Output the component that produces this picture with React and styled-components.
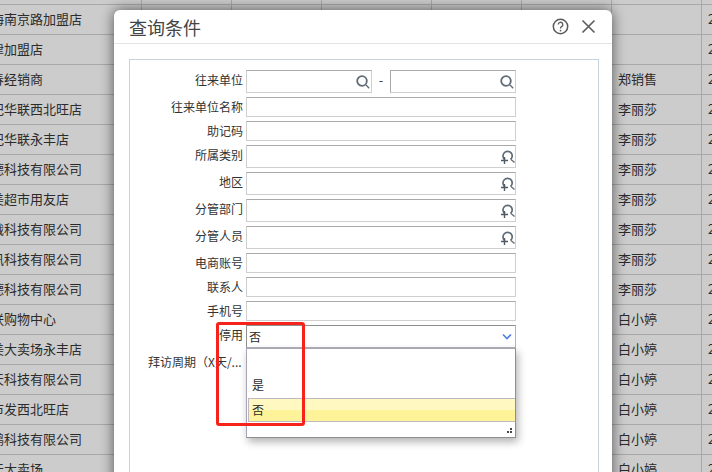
import React from "react";
import styled, { createGlobalStyle } from "styled-components";

const Global = createGlobalStyle`
  html, body { margin: 0; padding: 0; }
  body {
    width: 712px;
    height: 472px;
    overflow: hidden;
    background: #cccccc;
    font-family: "Noto Sans CJK SC", "Liberation Sans", sans-serif;
    font-size: 13px;
    color: #2b2b2b;
  }
`;

const rows = [
  ["海南京路加盟店", ""],
  ["津加盟店", ""],
  ["春经销商", "郑销售"],
  ["纪华联西北旺店", "李丽莎"],
  ["纪华联永丰店", "李丽莎"],
  ["德科技有限公司", "李丽莎"],
  ["美超市用友店", "李丽莎"],
  ["戬科技有限公司", "李丽莎"],
  ["讯科技有限公司", "李丽莎"],
  ["德科技有限公司", "李丽莎"],
  ["联购物中心", "白小婷"],
  ["美大卖场永丰店", "白小婷"],
  ["天科技有限公司", "白小婷"],
  ["市发西北旺店", "白小婷"],
  ["鹏科技有限公司", "白小婷"],
  ["天大卖场", "白小婷"],
];

const Page = styled.div`
  position: relative;
  width: 712px;
  height: 472px;
  overflow: hidden;
`;

const Sheet = styled.div`
  margin-top: -25px;
  margin-left: -15px;
`;

const SheetRow = styled.div`
  display: grid;
  grid-template-columns: 157px 90px 90px 110px 90px 90px 90px 90px 60px;
  height: 30px;
`;

const Cell = styled.div`
  box-sizing: border-box;
  height: 30px;
  line-height: 28px;
  padding-left: 6px;
  white-space: nowrap;
  overflow: hidden;
  border-right: 1px solid #a8a8a8;
  border-bottom: 1px solid #a8a8a8;
`;

const Dialog = styled.div`
  position: absolute;
  left: 114px;
  top: 10px;
  width: 498px;
  height: 480px;
  background: #fff;
  border-radius: 6px 6px 0 0;
  box-shadow: 0 0 14px rgba(0, 0, 0, 0.6);
`;

const DialogHeader = styled.div`
  display: flex;
  align-items: center;
  justify-content: space-between;
  box-sizing: border-box;
  height: 34px;
  padding: 0 16px 0 15px;
  border-bottom: 1px solid #e4e4e4;
`;

const Title = styled.div`
  font-size: 18px;
  line-height: 30px;
  color: #444;
`;

const HeaderIcons = styled.div`
  display: flex;
  align-items: center;
  gap: 12px;
`;

const Panel = styled.div`
  box-sizing: border-box;
  margin: 15px 13px 0 15px;
  height: 430px;
  padding-top: 10px;
  border: 1px solid #c5d3de;
  font-size: 12px;
`;

const FormRow = styled.div`
  display: flex;
  align-items: flex-start;
  height: ${(p) => (p.$tall ? 23 : 20)}px;
  margin-bottom: 4px;
`;

const Label = styled.div`
  width: 116px;
  flex: none;
  box-sizing: border-box;
  padding-right: 3px;
  text-align: right;
  line-height: ${(p) => (p.$tall ? 20 : 19)}px;
  color: #333;
  white-space: nowrap;
`;

const InputBox = styled.div`
  position: relative;
  display: flex;
  align-items: center;
  justify-content: flex-end;
  box-sizing: border-box;
  width: ${(p) => p.$w || 270}px;
  height: 100%;
  background: #fff;
  border: 1px solid #cfcfcf;
  border-top-color: #a9a9a9;
  border-left-color: ${(p) => (p.$strong ? "#a9a9a9" : "#cfcfcf")};
`;

const Dash = styled.div`
  width: 18px;
  text-align: center;
  line-height: 20px;
  font-size: 13px;
  color: #444;
`;

const SelectWrap = styled.div`
  position: relative;
  width: 270px;
  height: 100%;
`;

const SelectBox = styled.div`
  display: flex;
  align-items: center;
  justify-content: space-between;
  box-sizing: border-box;
  height: 100%;
  padding: 0 3px 0 2px;
  background: #fff;
  border: 1px solid #b4b4b4;
  border-top-color: #8f8f8f;
  border-left-color: #8f8f8f;
  line-height: 20px;
`;

const Dropdown = styled.div`
  position: absolute;
  top: 23px;
  left: 0;
  width: 270px;
  height: 90px;
  box-sizing: border-box;
  padding-top: 24px;
  background: #fff;
  border: 1px solid #a9a4b8;
  border-right-color: #8e8e8e;
  border-bottom-color: #8e8e8e;
  box-shadow: 2px 4px 8px rgba(0, 0, 0, 0.3);
  z-index: 2;
`;

const Option = styled.div`
  box-sizing: border-box;
  height: 25px;
  padding-left: 5px;
  line-height: 23px;
  ${(p) =>
    p.$active &&
    `
    height: 24px;
    margin-left: 1px;
    border: 1px solid #bdb9c0;
    border-right: none;
    padding-left: 3px;
    line-height: 22px;
    background: linear-gradient(#fff8c0 0 50%, #fff39a 50% 100%);
  `}
`;

const Grip = styled.svg`
  position: absolute;
  right: 2px;
  bottom: 2px;
`;

const PeriodLabel = styled.div`
  width: 116px;
  box-sizing: border-box;
  padding: 0 0 0 18px;
  color: #333;
  line-height: 20px;
  white-space: nowrap;
  overflow: hidden;
`;

const RedBox = styled.div`
  position: absolute;
  left: 102px;
  top: 312px;
  width: 89px;
  height: 104px;
  box-sizing: border-box;
  border: 3px solid #f5231a;
  border-radius: 3px;
  z-index: 3;
`;

const SearchIcon = () => (
  <svg width="16" height="16" viewBox="0 0 16 16" fill="none">
    <circle cx="7" cy="7" r="4.8" stroke="#5f6b76" strokeWidth="1.8" />
    <path d="M11 11l3.2 3.2" stroke="#5f6b76" strokeWidth="1.3" />
  </svg>
);

const SearchPlusIcon = () => (
  <svg width="16" height="16" viewBox="0 0 16 16" fill="none">
    <path d="M6 10.7A4.6 4.6 0 1 1 11.5 10.5" stroke="#5f6b76" strokeWidth="1.7" />
    <path d="M5.5 8v7M2 11.5h7" stroke="#4f5a64" strokeWidth="1.4" />
    <path d="M12 10.5l3.5 3" stroke="#5f6b76" strokeWidth="1.3" />
  </svg>
);

const HelpIcon = () => (
  <svg width="17" height="17" viewBox="0 0 17 17" fill="none">
    <circle cx="8.5" cy="8.5" r="7.2" stroke="#5b5b5b" strokeWidth="1.5" />
    <path d="M6.2 6.6a2.3 2.3 0 1 1 3.4 2c-.8.5-1.1.9-1.1 1.8" stroke="#5b5b5b" strokeWidth="1.3" />
    <circle cx="8.5" cy="12.6" r="0.9" fill="#5b5b5b" />
  </svg>
);

const CloseIcon = () => (
  <svg width="15" height="15" viewBox="0 0 15 15" fill="none">
    <path d="M1.5 1.5l12 12M13.5 1.5l-12 12" stroke="#5b5b5b" strokeWidth="1.6" />
  </svg>
);

const ChevronIcon = () => (
  <svg width="10" height="7" viewBox="0 0 10 7" fill="none">
    <path d="M1 1.5l4 4 4-4" stroke="#4f7fe0" strokeWidth="1.6" />
  </svg>
);

const fields = [
  { label: "往来单位名称" },
  { label: "助记码" },
  { label: "所属类别", plus: true },
  { label: "地区", plus: true },
  { label: "分管部门", plus: true },
  { label: "分管人员", plus: true },
  { label: "电商账号" },
  { label: "联系人" },
  { label: "手机号" },
];

export default function App() {
  return (
    <Page>
      <Global />
      <Sheet>
        {[["", ""], ...rows].map((r, i) => (
          <SheetRow key={i}>
            <Cell>{r[0]}</Cell>
            <Cell />
            <Cell />
            <Cell />
            <Cell />
            <Cell />
            <Cell>{r[1]}</Cell>
            <Cell>{i > 0 ? "2" : ""}</Cell>
          </SheetRow>
        ))}
      </Sheet>
      <Dialog>
        <DialogHeader>
          <Title>查询条件</Title>
          <HeaderIcons>
            <HelpIcon />
            <CloseIcon />
          </HeaderIcons>
        </DialogHeader>
        <Panel>
          <FormRow $tall>
            <Label $tall>往来单位</Label>
            <InputBox $w={126}>
              <SearchIcon />
            </InputBox>
            <Dash>-</Dash>
            <InputBox $w={126} $strong>
              <SearchIcon />
            </InputBox>
          </FormRow>
          {fields.map((f) => (
            <FormRow key={f.label} $tall={f.plus}>
              <Label $tall={f.plus}>{f.label}</Label>
              <InputBox>{f.plus && <SearchPlusIcon />}</InputBox>
            </FormRow>
          ))}
          <FormRow $tall>
            <Label $tall>停用</Label>
            <SelectWrap>
              <SelectBox>
                <span>否</span>
                <ChevronIcon />
              </SelectBox>
              <Dropdown>
                <Option>是</Option>
                <Option $active>否</Option>
                <Grip width="8" height="8" viewBox="0 0 8 8">
                  <path d="M5 1h2v2H5zM2 4h2v2H2zM5 4h2v2H5z" fill="#444" />
                </Grip>
              </Dropdown>
            </SelectWrap>
          </FormRow>
          <PeriodLabel>拜访周期（X天/...</PeriodLabel>
        </Panel>
        <RedBox />
      </Dialog>
    </Page>
  );
}
